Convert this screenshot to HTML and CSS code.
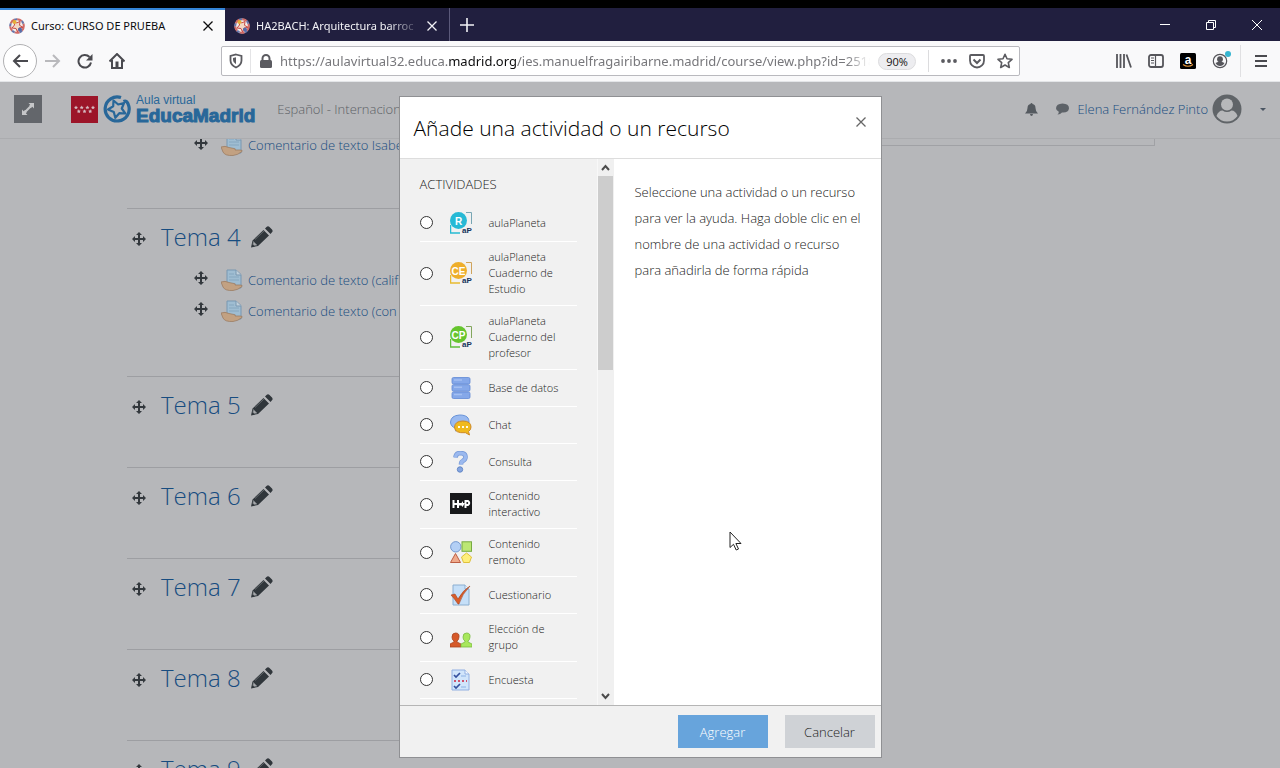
FILE: index.html
```html
<!DOCTYPE html>
<html lang="es">
<head>
<meta charset="utf-8">
<title>Curso: CURSO DE PRUEBA</title>
<meta name="viewport" content="width=device-width, initial-scale=1">
<link rel="stylesheet" href="styles.css">
</head>
<body>
<svg class="defs" aria-hidden="true">
  <symbol id="move" viewBox="0 0 14 14"><path d="M7 0l3 3H8v3h3V4l3 3-3 3V8H8v3h2l-3 3-3-3h2V8H3v2L0 7l3-3v2h3V3H4z" fill="#33383d"/></symbol>
  <symbol id="pencil" viewBox="0 0 22 22"><path d="M0 21.500l1.500-7L12.500 4l5.500 5.500L7 20zM14 2.500L15.500 1q1.500-1.500 3 0L21 3.500q1.200 1.500 0 2.800L19.500 8z" fill="#30363b"/><path d="M2.500 15.500l3.500 3.500-2.800.6-1.300-1.300zM4 13.500l9-8.500" fill="#a6a8ab" stroke="#777b80" stroke-width=".7"/></symbol>
  <symbol id="task" viewBox="0 0 22 22"><path d="M6 1h9l5 4.500V19H6z" fill="#9fbdd2" stroke="#7897b1"/><path d="M15 1v5h5" fill="#c1d0db" stroke="#7897b1"/><path d="M8 5h5M8 8h10M8 11h10" stroke="#86a7bf"/><path d="M0 13q4-1.500 8 .5l5 1q2 0 1 1.500h5q3 0 2 1.500-4 3.500-9 4Q4 22 2 18z" fill="#c2a182" stroke="#98775b" stroke-width=".7"/></symbol>
  <symbol id="favicon" viewBox="0 0 16 16"><circle cx="8" cy="8" r="7.500" fill="#f3eee9"/><circle cx="8" cy="8" r="6.800" fill="none" stroke="#d06a66" stroke-width="2" stroke-dasharray="5 3"/><circle cx="8" cy="8" r="6.800" fill="none" stroke="#6875a8" stroke-width="2" stroke-dasharray="3 5" stroke-dashoffset="3"/><path d="M5 2l2.500 3L11 3.500l-.5 3.800 3.500 2-4 .8L8.500 14 7 10.500 3 10l2.500-3z" fill="#f2d8c5" stroke="#ca4945"/><circle cx="5.500" cy="4" r="2" fill="#e5af39"/><circle cx="11" cy="11.500" r="2" fill="#536aa8"/></symbol>
  <symbol id="cross" viewBox="0 0 10 10"><path d="M.5.5l9 9M9.500.5l-9 9" fill="none" stroke="currentColor" stroke-width="1.300"/></symbol>
</svg>

<div class="strip"></div>
<div class="tabs">
  <div class="tab tab-active"><svg class="i16"><use href="#favicon"/></svg><span class="tab-title">Curso: CURSO DE PRUEBA</span><button class="tab-close" aria-label="Cerrar pestaña"><svg class="i10"><use href="#cross"/></svg></button></div>
  <div class="tab"><svg class="i16"><use href="#favicon"/></svg><span class="tab-title fade">HA2BACH: Arquitectura barroc</span><button class="tab-close" aria-label="Cerrar pestaña"><svg class="i10"><use href="#cross"/></svg></button></div>
  <button class="new-tab" aria-label="Nueva pestaña"><svg width="14" height="14" viewBox="0 0 14 14"><path d="M7 0v14M0 7h14" stroke="currentColor" stroke-width="1.600"/></svg></button>
  <div class="window-controls">
    <button aria-label="Minimizar"><svg width="10" height="10"><path d="M0 4.500h10" stroke="#fff"/></svg></button>
    <button aria-label="Restaurar"><svg width="10" height="10"><path d="M.5 2.500h7v7h-7zM2.500 2.500v-2h7v7h-2" fill="none" stroke="#fff"/></svg></button>
    <button aria-label="Cerrar"><svg width="10" height="10"><path d="M0 0l10 10M10 0L0 10" stroke="#fff"/></svg></button>
  </div>
</div>

<div class="toolbar">
  <button class="back" aria-label="Atrás"><svg width="16" height="14" viewBox="0 0 16 14"><path d="M16 7H2M8 1L2 7l6 6" fill="none" stroke="#4a4a4f" stroke-width="2"/></svg></button>
  <button class="tool" aria-label="Adelante" disabled><svg width="16" height="14" viewBox="0 0 16 14"><path d="M0 7h14M8 1l6 6-6 6" fill="none" stroke="#b9b9bc" stroke-width="2"/></svg></button>
  <button class="tool" aria-label="Recargar"><svg width="16" height="16" viewBox="0 0 16 16"><path d="M12.500 4A6.300 6.300 0 1 0 14 9.500" fill="none" stroke="#4a4a4f" stroke-width="2"/><path d="M15.500 1v6.500H9z" fill="#4a4a4f"/></svg></button>
  <button class="tool" aria-label="Inicio"><svg width="16" height="16" viewBox="0 0 16 16"><path d="M.5 8.500L8 1l7.500 7.500M3 7v8h10V7" fill="none" stroke="#4a4a4f" stroke-width="2"/><path d="M6.500 15V8.500h3V15" fill="#4a4a4f"/></svg></button>
  <div class="urlbar">
    <button class="site" aria-label="Protección"><svg width="14" height="16" viewBox="0 0 14 16"><path d="M7 1.500L12.500 3v4.500q0 4.500-5.500 7-5.500-2.500-5.500-7V3z" fill="none" stroke="#5b5b60" stroke-width="1.800"/><path d="M7 4.300v7Q4 9.500 4 7V5z" fill="#5b5b60"/></svg></button>
    <button class="lock" aria-label="Sitio seguro"><svg width="12" height="14" viewBox="0 0 12 14"><rect y="6" width="12" height="8" rx="1.500" fill="#5b5b60"/><path d="M2.500 7V4.500a3.500 3.500 0 0 1 7 0V7" fill="none" stroke="#5b5b60" stroke-width="2"/></svg></button>
    <div class="url" role="textbox" aria-label="Dirección" contenteditable="true" spellcheck="false">https://aulavirtual32.educa.<b>madrid.org</b>/ies.manuelfragairibarne.madrid/course/view.php?id=2518</div>
    <button class="zoom">90%</button>
    <span class="url-sep"></span>
    <button class="page-action" aria-label="Acciones"><svg width="16" height="4"><circle cx="2" cy="2" r="1.900"/><circle cx="8" cy="2" r="1.900"/><circle cx="14" cy="2" r="1.900"/></svg></button>
    <button class="page-action" aria-label="Pocket"><svg width="16" height="15" viewBox="0 0 16 15"><path d="M2 1h12q1 0 1 1v4.500a7 7 0 0 1-14 0V2q0-1 1-1z" fill="none" stroke="#5b5b60" stroke-width="1.800"/><path d="M4.500 5.500L8 9l3.500-3.500" fill="none" stroke="#5b5b60" stroke-width="2"/></svg></button>
    <button class="page-action" aria-label="Marcador"><svg width="16" height="16" viewBox="0 0 16 16"><path d="M8 1.300l2 4.500 5 .5-3.700 3.300 1 4.900L8 12l-4.300 2.500 1-4.900L1 6.300l5-.5z" fill="none" stroke="#5b5b60" stroke-width="1.600" stroke-linejoin="round"/></svg></button>
  </div>
  <button class="tool" aria-label="Biblioteca"><svg width="16" height="14" viewBox="0 0 16 14"><path d="M1 0v14M4.500 0v14M8 0v14M10.500.5L15 13.500" stroke="#55555a" stroke-width="1.800"/></svg></button>
  <button class="tool" aria-label="Barra lateral"><svg width="16" height="14" viewBox="0 0 16 14"><rect x="1" y="1" width="14" height="12" rx="2" fill="none" stroke="#55555a" stroke-width="1.800"/><path d="M7.500 1v12M3 4h3M3 6.500h3M3 9h3" stroke="#55555a" stroke-width="1.200"/></svg></button>
  <button class="tool" aria-label="Amazon"><svg width="16" height="16" viewBox="0 0 16 16"><rect width="16" height="16" rx="1.500"/><text x="8" y="10.500" text-anchor="middle" class="amazon">a</text><path d="M3 11.500q5 3.500 10 0" fill="none" stroke="#ea9b3e" stroke-width="1.200"/></svg></button>
  <button class="tool" aria-label="Cuenta"><svg width="24" height="24" viewBox="0 0 24 24"><circle cx="12" cy="12" r="6.700" fill="none" stroke="#55555a" stroke-width="1.200"/><circle cx="12" cy="10.200" r="2.900" fill="#55555a"/><path d="M7.500 14q4.500-2.500 9 0-1.500 3-4.500 3t-4.500-3z" fill="#55555a"/><circle cx="20" cy="5" r="3" fill="#35b5d0"/></svg></button>
  <span class="tool-sep"></span>
  <button class="tool" aria-label="Menú"><svg width="12" height="12"><path d="M0 1h12M0 6h12M0 11h12" stroke="#4a4a4f" stroke-width="2"/></svg></button>
</div>

<div class="page">
  <header class="site-header">
    <button class="expand" aria-label="Pantalla completa"><svg width="12" height="12" viewBox="0 0 12 12"><path d="M6.500 0H12v5.500L10.300 3.800 9 5 7 3l1.200-1.300zM5.500 12H0V6.500l1.700 1.700L3 7l2 2-1.200 1.300zM7.500 3L9 4.500 4.500 9 3 7.500z" fill="#c5c6c8"/></svg></button>
    <a class="brand" href="#">
      <svg width="27" height="27" viewBox="0 0 27 27"><rect width="27" height="27" fill="#9c1529"/><g fill="#d5b9c0"><path id="s" d="M5 9.500l.6 1.300 1.400.1-1 1 .3 1.400L5 12.600l-1.300.7.3-1.400-1-1 1.400-.1z"/><use href="#s" x="5.700"/><use href="#s" x="11.400"/><use href="#s" x="17"/><use href="#s" x="2.800" y="3.800"/><use href="#s" x="8.500" y="3.800"/><use href="#s" x="14.200" y="3.800"/></g></svg>
      <svg width="28" height="28" viewBox="0 0 28 28"><path d="M18 2.600A12 12 0 1 0 25.500 10Q24 5 20.500 6.500" fill="none" stroke="#286799" stroke-width="3.200"/><path d="M10.500 5.500l4.700 4 5.800-1.500-2.200 5.500 3.500 5-6-.3-4 4.600-1.500-5.800L5 14.500l5.200-3.200z" fill="none" stroke="#286799" stroke-width="2.200" stroke-linejoin="round"/></svg>
      <span class="brand-text"><span class="brand-top">Aula virtual</span><strong>EducaMadrid</strong></span>
    </a>
    <span class="lang">Español - Internacional (es)</span>
    <div class="user">
      <svg width="13" height="13" viewBox="0 0 13 13"><path d="M6.500 0q1 0 1 1 3 .7 3 4 0 3.500 2.500 5.500H0Q2.500 8.500 2.500 5q0-3.300 3-4 0-1 1-1zM5 11h3q-.3 2-1.500 2T5 11z" fill="#555a60"/></svg>
      <svg class="talk" width="13" height="12" viewBox="0 0 13 12"><path d="M6.500.5Q13 .8 13 5.200 12.500 10 6 9.500 4 11.700 1.500 11.500 3 10.300 2.800 8.700 0 7.500 0 5.200.3.800 6.500.5z" fill="#5d6268"/></svg>
      <a href="#">Elena Fernández Pinto</a>
      <svg width="30" height="30" viewBox="0 0 30 30"><circle cx="15" cy="15" r="14.500" fill="#606468"/><circle cx="15" cy="10.500" r="6" fill="#b7b8ba"/><path d="M4.500 22q2-5.500 6-5.500 4.500 3 9 0 4 0 6 5.500-4 5.500-10.500 5.500T4.500 22z" fill="#b7b8ba"/></svg>
      <svg class="caret" width="6" height="3"><path d="M0 0h6L3 3z" fill="#4a5562"/></svg>
    </div>
  </header>

  <main class="course">
    <div class="topics">
      <ul class="mods scrolled">
        <li><svg class="i14"><use href="#move"/></svg><svg class="i22"><use href="#task"/></svg><a href="#">Comentario de texto Isabel</a></li>
      </ul>
      <section class="topic topic-open">
        <h2><svg class="i14"><use href="#move"/></svg><a href="#">Tema 4</a><svg class="i22"><use href="#pencil"/></svg></h2>
        <ul class="mods">
          <li><svg class="i14"><use href="#move"/></svg><svg class="i22"><use href="#task"/></svg><a href="#">Comentario de texto (calificación)</a></li>
          <li><svg class="i14"><use href="#move"/></svg><svg class="i22"><use href="#task"/></svg><a href="#">Comentario de texto (con rúbrica)</a></li>
        </ul>
      </section>
      <section class="topic"><h2><svg class="i14"><use href="#move"/></svg><a href="#">Tema 5</a><svg class="i22"><use href="#pencil"/></svg></h2></section>
      <section class="topic"><h2><svg class="i14"><use href="#move"/></svg><a href="#">Tema 6</a><svg class="i22"><use href="#pencil"/></svg></h2></section>
      <section class="topic"><h2><svg class="i14"><use href="#move"/></svg><a href="#">Tema 7</a><svg class="i22"><use href="#pencil"/></svg></h2></section>
      <section class="topic"><h2><svg class="i14"><use href="#move"/></svg><a href="#">Tema 8</a><svg class="i22"><use href="#pencil"/></svg></h2></section>
      <section class="topic"><h2><svg class="i14"><use href="#move"/></svg><a href="#">Tema 9</a><svg class="i22"><use href="#pencil"/></svg></h2></section>
    </div>
    <aside class="block"></aside>
  </main>

  <div class="overlay">
    <form class="modal" role="dialog" aria-labelledby="dialog-title">
      <div class="modal-head"><h1 id="dialog-title">Añade una actividad o un recurso</h1><button type="button" class="modal-close" aria-label="Cerrar"><svg class="i10"><use href="#cross"/></svg></button></div>
      <div class="modal-body">
        <div class="chooser">
          <div class="options">
            <h3>ACTIVIDADES</h3>
            <label class="option"><input type="radio" name="mod"><svg class="i22" viewBox="0 0 22 22"><path d="M16 .5h5.500V12" fill="none" stroke="#78a6b4"/><path d="M.5 13v8H10" fill="none" stroke="#27bad2" stroke-width="1.500"/><circle cx="8.500" cy="8.500" r="8.500" fill="#27b9d5"/><text x="8.500" y="12.500" text-anchor="middle" class="glyph">R</text><text x="12" y="21" class="ap">aP</text></svg><span>aulaPlaneta</span></label>
            <label class="option"><input type="radio" name="mod"><svg class="i22" viewBox="0 0 22 22"><path d="M16 .5h5.500V12" fill="none" stroke="#d0a45c"/><path d="M.5 13v8H10" fill="none" stroke="#e7ba31" stroke-width="1.500"/><circle cx="8.500" cy="8.500" r="8.500" fill="#eeae2b"/><text x="8.500" y="12.500" text-anchor="middle" class="glyph">CE</text><text x="12" y="21" class="ap">aP</text></svg><span>aulaPlaneta Cuaderno de Estudio</span></label>
            <label class="option"><input type="radio" name="mod"><svg class="i22" viewBox="0 0 22 22"><path d="M16 .5h5.500V12" fill="none" stroke="#83a65d"/><path d="M.5 13v8H10" fill="none" stroke="#60bf3d" stroke-width="1.500"/><circle cx="8.500" cy="8.500" r="8.500" fill="#66c52e"/><text x="8.500" y="12.500" text-anchor="middle" class="glyph">CP</text><text x="12" y="21" class="ap">aP</text></svg><span>aulaPlaneta Cuaderno del profesor</span></label>
            <label class="option"><input type="radio" name="mod"><svg class="i22" viewBox="0 0 22 22"><g fill="#85a8e9" stroke="#6189d4" stroke-width=".8"><rect x="2" y=".5" width="18" height="6.500" rx="1.500"/><rect x="2" y="7.700" width="18" height="6.500" rx="1.500"/><rect x="2" y="15" width="18" height="6.500" rx="1.500"/></g><path d="M4 3h8M4 10.200h8M4 17.500h8" stroke="#a4bff2" stroke-width="1.500"/></svg><span>Base de datos</span></label>
            <label class="option"><input type="radio" name="mod"><svg class="i22" viewBox="0 0 22 22"><path d="M9.500 1C17 1 19 4 19 8s-3 7.500-9.500 7.500l-4 1.500.5-2.500Q.5 12.500.5 8 1 1.500 9.500 1z" fill="#9abaf0" stroke="#6792d8"/><path d="M13 7q8 .2 8 6 0 3-2.500 4.500l1 3.500-4-2.300Q4.500 19.500 4.500 13 5 7 13 7z" fill="#f0b91e" stroke="#ce8926"/><path d="M8 13h2M12 13h2M16 13h2" stroke="#fffbe6" stroke-width="2"/></svg><span>Chat</span></label>
            <label class="option"><input type="radio" name="mod"><svg class="i22" viewBox="0 0 22 22"><path d="M5.500 6.500q.3-4.500 5-4.500 5 .2 5 4 0 2.500-2.700 4-1.800.8-1.800 3.500" fill="none" stroke="#7498d6" stroke-width="4.600"/><path d="M5.500 6.500q.3-4.500 5-4.500 5 .2 5 4 0 2.500-2.700 4-1.800.8-1.800 3.500" fill="none" stroke="#9bb9ef" stroke-width="3.200"/><circle cx="10" cy="18.500" r="2.700" fill="#86a6e1" stroke="#6488c6"/></svg><span>Consulta</span></label>
            <label class="option"><input type="radio" name="mod"><svg class="i22" viewBox="0 0 22 22"><rect width="22" height="21" fill="#18191b"/><path d="M3.500 7v8M8 7v8M3.500 11H8M15.500 7v8M15.500 8H18q2.500 2 0 4h-3" fill="none" stroke="#fff" stroke-width="2"/><path d="M9 10h2.500l1.500-2v2h2l-2.500 4-1-1.500H9z" fill="#fff"/></svg><span>Contenido interactivo</span></label>
            <label class="option"><input type="radio" name="mod"><svg class="i22" viewBox="0 0 22 22"><circle cx="5.800" cy="5.800" r="5.200" fill="#b3cff5" stroke="#7599cf"/><rect x="12" y=".8" width="9.500" height="9.500" fill="#bce774" stroke="#77aa42"/><path d="M5.500 12.500l5 9H.5z" fill="#efaa8c" stroke="#bd5e43"/><path d="M16.500 12l5 4-2 5.500h-6L11.500 16z" fill="#ffef7b" stroke="#dfc13c"/></svg><span>Contenido remoto</span></label>
            <label class="option"><input type="radio" name="mod"><svg class="i22" viewBox="0 0 22 22"><path d="M3 1h12l4 4v16H3z" fill="#c5dff8" stroke="#8baed0"/><path d="M15 1v4h4" fill="#eef7ff" stroke="#8baed0"/><path d="M1 11l4-1 3 5Q13 6 20 2q-8 8-11 18H8Q4 14 1 11z" fill="#d95c28" stroke="#a44523" stroke-width=".6"/></svg><span>Cuestionario</span></label>
            <label class="option"><input type="radio" name="mod"><svg class="i22" viewBox="0 0 22 22"><g stroke-width=".8"><path d="M5.500 7q4 0 3.500 4-.2 3-2 4v1l4 2v3H0v-3l4-2v-1q-2-1-2-4 0-4 3.500-4z" fill="#d65929" stroke="#aa4521"/><path d="M16.500 7q4 0 3.500 4-.2 3-2 4v1l4 2v3H11v-3l4-2v-1q-2-1-2-4 0-4 3.500-4z" fill="#a8e75c" stroke="#79bb40"/></g></svg><span>Elección de grupo</span></label>
            <label class="option"><input type="radio" name="mod"><svg class="i22" viewBox="0 0 22 22"><path d="M2 1h13l4 4v16H2z" fill="#d1e5fb" stroke="#91afe2"/><path d="M15 1v4h4" fill="#f5faff" stroke="#91afe2"/><path d="M4 6l2 2 4-4M4 17l2 2 4-4" fill="none" stroke="#344f9e" stroke-width="1.700"/><path d="M11 7h5M11 18h5" stroke="#8cb1e4"/><path d="M4 12h13" stroke="#cf526d" stroke-width="2" stroke-dasharray="2 2"/></svg><span>Encuesta</span></label>
            <label class="option"><input type="radio" name="mod" aria-label="Etiqueta"><svg class="i22" viewBox="0 0 22 22"><circle cx="18" cy="3" r="2.500" fill="#8d9198"/></svg></label>
          </div>
          <div class="scrollbar" aria-hidden="true">
            <svg width="9" height="17" viewBox="0 0 9 17"><path d="M1 11l3.500-4L8 11" fill="none" stroke="#4b4b4b" stroke-width="2"/></svg>
            <span class="thumb"></span>
            <svg width="9" height="17" viewBox="0 0 9 17"><path d="M1 6l3.500 4L8 6" fill="none" stroke="#4b4b4b" stroke-width="2"/></svg>
          </div>
        </div>
        <p class="help">Seleccione una actividad o un recurso para ver la ayuda. Haga doble clic en el nombre de una actividad o recurso para añadirla de forma rápida</p>
      </div>
      <div class="modal-foot"><button type="button" class="btn btn-primary">Agregar</button><button type="button" class="btn">Cancelar</button></div>
    </form>
  </div>
</div>
<svg class="pointer" width="14" height="20" viewBox="0 0 14 20" aria-hidden="true"><path d="M1 1v15.500l3.500-3.200 2.700 5.700 2.300-1-2.600-5.500H12z" fill="#fff" stroke="#222"/></svg>
</body>
</html>
```
FILE: styles.css
```css
* { box-sizing: border-box; }
body {
  margin: 0;
  height: 100vh;
  overflow: hidden;
  display: flex;
  flex-direction: column;
  font-family: "Open Sans", "Noto Sans", sans-serif;
  font-size: 13px;
  font-weight: 300;
  color: #222;
  background: #000;
}
button { border: 0; padding: 0; background: none; font: inherit; color: inherit; display: flex; align-items: center; justify-content: center; }
a { color: inherit; text-decoration: none; }
ul, h1, h2, h3, p { margin: 0; padding: 0; font-weight: 300; }
svg { flex: none; display: block; }
.defs { position: absolute; width: 0; height: 0; }
.i10 { width: 10px; height: 10px; }
.i14 { width: 14px; height: 14px; }
.i16 { width: 16px; height: 16px; }
.i22 { width: 22px; height: 22px; }

/* Browser frame */
.strip { flex: none; height: 8px; background: #000; }
.tabs { flex: none; display: flex; height: 33px; background: #211f3f; color: #f2f2f6; font-family: "Noto Sans", sans-serif; font-size: 11px; font-weight: 400; }
.tab { width: 225px; display: flex; align-items: center; gap: 6px; padding: 2px 12px 0 9px; border-right: 1px solid #5b597a; }
.tab-active { background: #f9f9fa; color: #0c0c0d; border-top: 2px solid #3484d6; padding-top: 0; border-right: 0; }
.tab-title { flex: 1; min-width: 0; overflow: hidden; white-space: nowrap; }
.fade { -webkit-mask-image: linear-gradient(to right, #000 80%, transparent); mask-image: linear-gradient(to right, #000 80%, transparent); }
.new-tab { width: 33px; }
.window-controls { margin-left: auto; display: flex; }
.window-controls button { width: 46px; }
.toolbar { flex: none; display: flex; align-items: center; height: 41px; padding: 0 3px; background: #f9f9fa; border-bottom: 1px solid #e3e5e8; font-weight: 400; }
.back { width: 34px; height: 34px; border: 1px solid #b1b1b3; border-radius: 50%; background: #fff; }
.tool { width: 32px; height: 32px; }
.tool-sep { width: 1px; height: 32px; margin: 0 4px; background: #e0e0e2; }
.urlbar { flex: 1; min-width: 0; height: 30px; margin: 0 88px; display: flex; align-items: center; background: #fff; border: 1px solid #b9b9be; border-radius: 2px; }
.site { width: 29px; height: 24px; border-right: 1px solid #e4e4e6; }
.lock { width: 29px; }
.url { flex: 1; min-width: 0; overflow: hidden; white-space: nowrap; font-family: "Noto Sans", sans-serif; font-size: 13px; color: #77777b; -webkit-mask-image: linear-gradient(to right, #000 96%, transparent); mask-image: linear-gradient(to right, #000 96%, transparent); }
.url b { font-weight: 400; color: #0c0c0d; }
.zoom { width: 38px; height: 17px; margin: 0 12px 0 8px; border: 1px solid #dcdcde; border-radius: 9px; background: #ededf0; font-size: 11px; color: #111; }
.url-sep { width: 1px; height: 22px; margin-right: 6px; background: #dcdcde; }
.page-action { width: 28px; fill: #5b5b60; }
.amazon { font: bold 12px "Liberation Sans", sans-serif; fill: #fff; }

/* Course page */
.page { flex: 1; min-height: 0; position: relative; overflow: hidden; background: #b6b7ba; display: flex; flex-direction: column; }
.site-header { flex: none; height: 57px; display: flex; align-items: center; padding: 0 14px 2px; border-bottom: 1px solid #abacaf; color: #5d6166; }
.expand { width: 28px; height: 28px; background: #63666b; }
.brand { display: flex; align-items: center; gap: 5px; margin-left: 29px; color: #286799; font-family: "Liberation Sans", sans-serif; font-weight: 400; }
.brand-text { display: flex; flex-direction: column; }
.brand-top { font-size: 12px; line-height: 13px; }
.brand strong { font-size: 19px; line-height: 18px; -webkit-text-stroke: 1px #286799; }
.lang { margin-left: 22px; }
.user { margin-left: auto; display: flex; align-items: center; gap: 4px; color: #174c80; }
.talk { margin: 0 4px 0 14px; }
.caret { margin: 0 0 0 14px; }
.course { flex: 1; min-height: 0; overflow: hidden; display: grid; grid-template-columns: 1fr 290px; gap: 16px; padding: 0 125px 0 127px; align-items: start; color: #174c80; }
.topic { height: 91px; border-top: 1px solid #9d9ea2; }
.topic-open { height: 168px; }
.topic h2 { display: flex; align-items: center; gap: 10px; padding: 8px 0 0 5px; height: 50px; font-size: 24px; }
.topic h2 a { margin-bottom: 4px; }
.topic h2 .i22 { margin-bottom: 3px; }
.topic h2 .i14 { margin: 2px 5px 0 0; }
.mods { list-style: none; padding: 5px 0 0 67px; }
.mods li { display: flex; align-items: center; height: 31px; }
.mods .i22 { margin: 0 5px 0 13px; }
.mods .i14 { margin-bottom: 3px; }
.scrolled { height: 79px; padding-top: 0; margin-top: -10px; }
.block { height: 7px; border: 1px solid #a0a1a5; border-top: 0; }

/* Activity chooser */
.overlay { position: absolute; inset: 0; display: flex; justify-content: center; padding: 14px 0 10px; }
.modal { width: 483px; display: flex; flex-direction: column; background: #fff; border: 1px solid #8f9093; }
.modal-head { flex: none; height: 62px; display: flex; align-items: flex-start; justify-content: space-between; padding: 16px 15px 0 14px; border-bottom: 1px solid #ddd; }
.modal-head h1 { font-size: 21px; line-height: 30px; color: #000; }
.modal-close { padding-top: 4px; color: #666; }
.modal-body { flex: 1; min-height: 0; display: flex; }
.chooser { width: 214px; display: flex; background: #f1f1f1; }
.options { flex: 1; overflow: hidden; padding: 16px 20px 0; border-right: 1px solid #f8f8f8; }
.options h3 { font-size: 13px; line-height: 18px; margin-bottom: 12px; }
.option { display: flex; align-items: center; min-height: 37px; padding: 7px 0 8px; border-bottom: 1px solid #fff; font-size: 11px; line-height: 16px; }
.option input { appearance: none; flex: none; width: 13px; height: 13px; margin: 0 17px 0 0; border: 1px solid #333; border-radius: 50%; background: #fff; }
.option span { margin-left: 17px; max-width: 76px; }
.option svg { margin: -1px 0; }
.glyph { font: bold 10px "Liberation Sans", sans-serif; fill: #fff; }
.ap { font: bold 8px "Liberation Sans", sans-serif; fill: #17355c; }
.scrollbar { width: 16px; display: flex; flex-direction: column; align-items: center; background: #f0f0f0; }
.thumb { width: 15px; height: 194px; margin-bottom: auto; background: #cdcdcd; }
.help { flex: 1; padding: 20px 16px 0 21px; line-height: 26px; }
.modal-foot { flex: none; height: 52px; display: flex; align-items: center; justify-content: flex-end; gap: 17px; padding: 0 6px; background: #f1f1f1; border-top: 1px solid #b5b5b5; }
.btn { width: 90px; height: 33px; background: #cfd2d6; }
.btn-primary { background: #67a4dc; color: #fff; }
.pointer { position: absolute; left: 729px; top: 531px; }
```
